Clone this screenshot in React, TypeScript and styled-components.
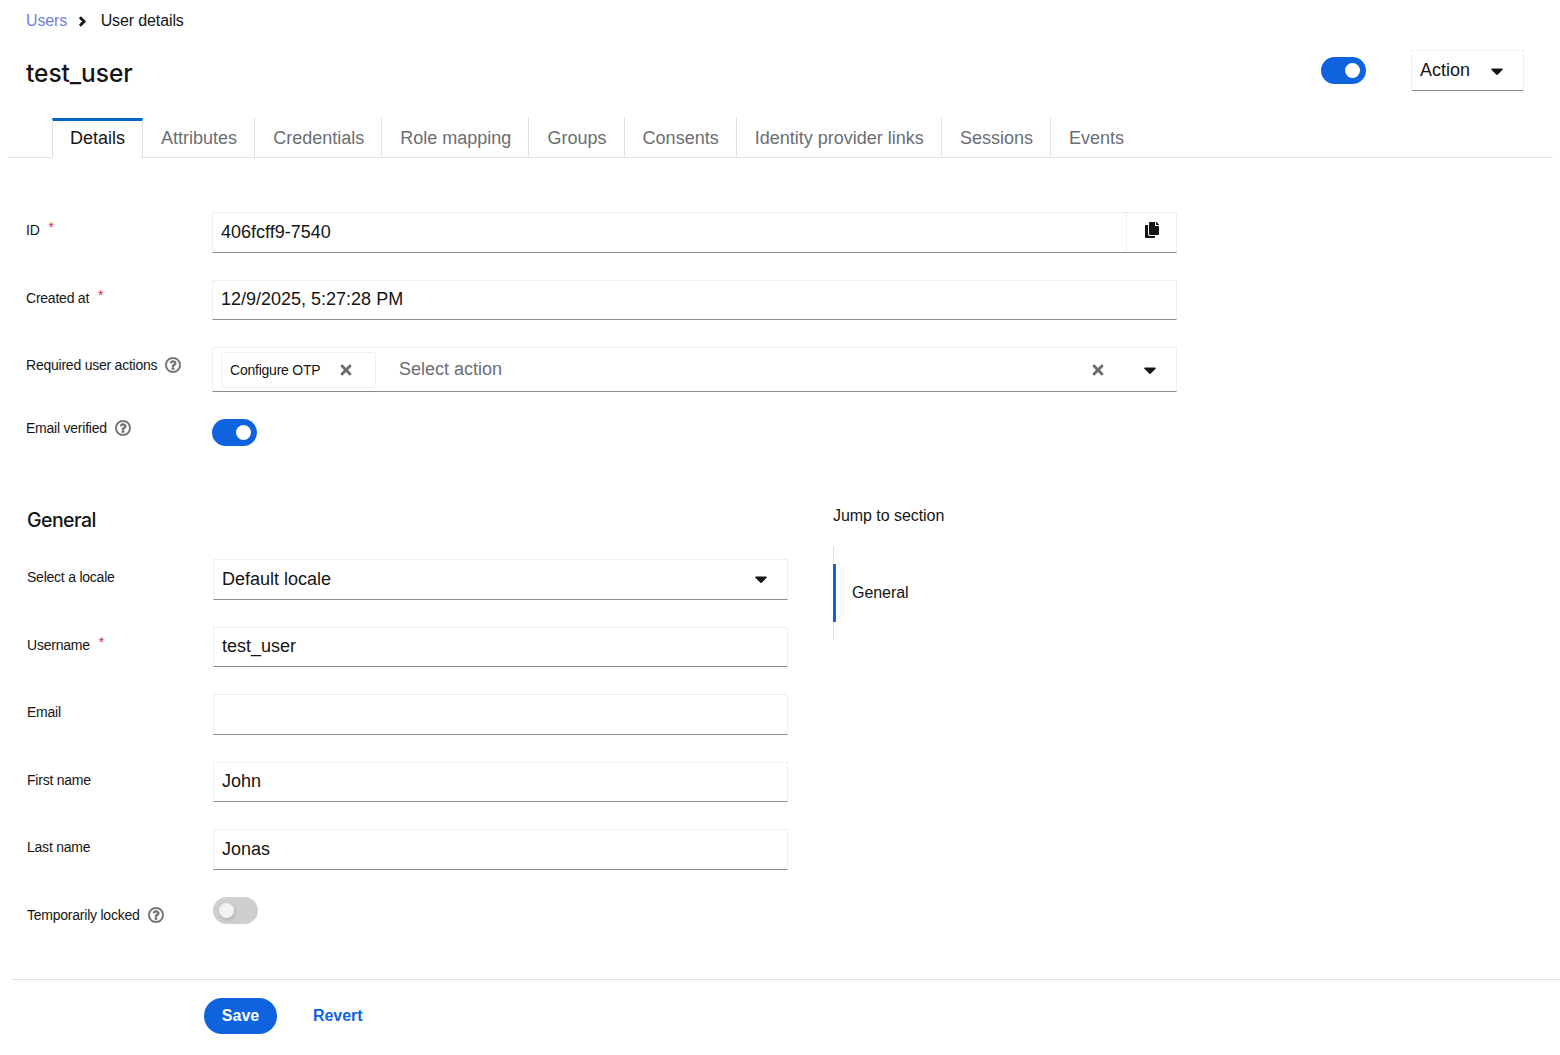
import React from "react";
import styled, { createGlobalStyle } from "styled-components";
import { FaAngleRight, FaCaretDown, FaCopy, FaRegQuestionCircle, FaTimes } from "react-icons/fa";

const Global = createGlobalStyle`
  html, body { margin: 0; padding: 0; background: #fff; }
  body { font-family: "Liberation Sans", Arial, sans-serif; color: #151515; }
  * { box-sizing: border-box; }
`;

const Page = styled.div`
  width: 1560px;
  height: 1055px;
  overflow: hidden;
  display: flex;
  flex-direction: column;
`;

const Breadcrumb = styled.nav`
  display: flex;
  align-items: center;
  height: 18px;
  margin: 12px 0 0 26px;
  font-size: 16px;
  line-height: 18px;
  letter-spacing: -0.12px;
  color: #151515;
`;

const Crumb = styled.a`
  color: #7082d8;
`;

const CrumbSep = styled.span`
  display: inline-flex;
  width: 33.5px;
  justify-content: center;
  padding-right: 2px;
  font-size: 15px;
  color: #151515;
  svg {
    stroke: currentColor;
    stroke-width: 24px;
  }
`;

const Header = styled.header`
  display: flex;
  align-items: center;
  justify-content: space-between;
  height: 41px;
  margin-top: 20px;
  padding: 0 36px 0 26px;
`;

const Title = styled.h1`
  margin: 4px 0 0 0;
  font-family: Inter, "Noto Sans", sans-serif;
  font-size: 24.5px;
  font-weight: 500;
  letter-spacing: -0.05px;
  color: #151515;
`;

const HeaderActions = styled.div`
  display: flex;
  align-items: center;
  gap: 45px;
`;

const Toggle = styled.span<{ $on?: boolean }>`
  position: relative;
  display: block;
  flex: none;
  width: 45px;
  height: 27px;
  border-radius: 14px;
  background: ${(p) => (p.$on ? "#0f63df" : "#cfcfcf")};
  &::after {
    content: "";
    position: absolute;
    top: 6px;
    left: ${(p) => (p.$on ? "24px" : "6px")};
    width: 15px;
    height: 15px;
    border-radius: 50%;
    background: ${(p) => (p.$on ? "#fff" : "#f2f2f2")};
    box-shadow: ${(p) => (p.$on ? "none" : "1px 2px 4px rgba(0, 0, 0, 0.14)")};
  }
`;

const ActionButton = styled.button`
  display: flex;
  align-items: center;
  width: 113px;
  height: 41px;
  padding: 0 0 0 8px;
  background: #fff;
  border: 1px solid #f0f0f0;
  border-bottom-color: #8a8d90;
  font: inherit;
  font-size: 18px;
  color: #151515;
  svg {
    margin-left: 17px;
    font-size: 20px;
  }
`;

const TabBar = styled.div`
  display: flex;
  height: 40px;
  margin: 27px 7px 0 8px;
  padding-left: 44px;
  border-bottom: 1px solid #e0e0e0;
`;

const Tab = styled.div<{ $active?: boolean }>`
  display: flex;
  align-items: center;
  height: ${(p) => (p.$active ? "40px" : "39px")};
  padding: ${(p) => (p.$active ? "0 17px 3px 17px" : "1px 17.1px 0 18px")};
  font-size: 18px;
  white-space: nowrap;
  background: #fff;
  color: ${(p) => (p.$active ? "#151515" : "#6a6e73")};
  border-right: 1px solid #e0e0e0;
  border-left: ${(p) => (p.$active ? "1px solid #e0e0e0" : "none")};
  border-top: ${(p) => (p.$active ? "3px solid #0066cc" : "none")};
  &:last-child {
    border-right: none;
  }
`;

const TopForm = styled.section`
  display: flex;
  flex-direction: column;
  gap: 27px;
  margin: 54px 0 0 26px;
  width: 1151px;
`;

const Row = styled.div`
  display: grid;
  grid-template-columns: 186px 1fr;
  align-items: start;
`;

const Label = styled.label<{ $top?: number }>`
  display: flex;
  align-items: center;
  height: 18px;
  margin-top: ${(p) => p.$top ?? 9}px;
  font-size: 14px;
  letter-spacing: -0.23px;
  color: #151515;
  white-space: nowrap;
`;

const Star = styled.span`
  position: relative;
  top: -3px;
  margin-left: 9px;
  font-size: 14px;
  color: #d9254a;
`;

const Help = styled.span`
  display: inline-flex;
  margin-left: 8px;
  font-size: 16px;
  color: #6a6e73;
  svg {
    stroke: currentColor;
    stroke-width: 14px;
  }
`;

const Field = styled.div<{ $h?: number }>`
  display: flex;
  align-items: center;
  height: ${(p) => p.$h ?? 40.5}px;
  padding-left: 8px;
  border: 1px solid #f0f0f0;
  border-bottom-color: #8a8d90;
  font-size: 18px;
  color: #151515;
  background: #fff;
`;

const FieldText = styled.span`
  flex: 1;
`;

const CopyCell = styled.span`
  display: flex;
  align-items: center;
  justify-content: center;
  width: 50px;
  height: 100%;
  padding: 0 0 5px 1px;
  border-left: 1px solid #f0f0f0;
  font-size: 16px;
  color: #151515;
`;

const Chip = styled.span`
  display: flex;
  align-items: center;
  justify-content: space-between;
  width: 155px;
  height: 36px;
  padding: 0 21px 0 8px;
  border: 1px solid #f0f0f0;
  border-radius: 3px;
  font-size: 14px;
  letter-spacing: -0.23px;
  svg {
    font-size: 16px;
    color: #6a6e73;
  }
`;

const Placeholder = styled.span`
  flex: 1;
  margin-left: 23px;
  color: #6a6e73;
`;

const ClearIcon = styled.span`
  display: inline-flex;
  margin-right: 34px;
  font-size: 16px;
  color: #6a6e73;
`;

const CaretIcon = styled.span`
  display: inline-flex;
  margin-right: 16px;
  font-size: 20px;
  color: #151515;
`;

const SectionWrap = styled.div`
  display: flex;
  margin: 0 0 0 27px;
  gap: 45px;
`;

const GeneralForm = styled.section`
  display: flex;
  flex-direction: column;
  width: 761px;
  margin-top: 59px;
`;

const SectionTitle = styled.h2`
  height: 30px;
  margin: 0 0 24px;
  font-family: Inter, "Noto Sans", sans-serif;
  font-size: 19.5px;
  line-height: 30px;
  font-weight: 500;
  letter-spacing: -0.55px;
  color: #151515;
`;

const Rows = styled.div`
  display: flex;
  flex-direction: column;
  gap: 27px;
`;

const Jump = styled.aside`
  margin-top: 61px;
`;

const JumpTitle = styled.div`
  height: 18px;
  font-size: 16px;
  line-height: 18px;
  letter-spacing: -0.05px;
  color: #151515;
`;

const JumpList = styled.div`
  display: flex;
  align-items: center;
  height: 94px;
  margin-top: 21px;
  border-left: 1px solid #e0e0e0;
`;

const JumpItem = styled.div`
  display: flex;
  align-items: center;
  height: 58px;
  margin: 0 0 0 -1px;
  padding-left: 16px;
  border-left: 3px solid #0f63df;
  font-size: 16px;
  letter-spacing: -0.05px;
  color: #151515;
`;

const Footer = styled.footer`
  display: flex;
  align-items: center;
  gap: 36px;
  margin: 55.5px 0 0 12px;
  padding: 18px 0 0 192px;
  border-top: 1px solid #e0e0e0;
`;

const Save = styled.button`
  width: 73px;
  height: 36px;
  border: none;
  border-radius: 18px;
  background: #0f63df;
  color: #fff;
  font: inherit;
  font-size: 16px;
  font-weight: 700;
`;

const Revert = styled.a`
  font-size: 16px;
  font-weight: 700;
  letter-spacing: -0.05px;
  color: #0f63df;
`;

const tabs = ["Attributes", "Credentials", "Role mapping", "Groups", "Consents", "Identity provider links", "Sessions", "Events"];

const fields: { label: string; value: string; required?: boolean; caret?: boolean }[] = [
  { label: "Select a locale", value: "Default locale", caret: true },
  { label: "Username", value: "test_user", required: true },
  { label: "Email", value: "" },
  { label: "First name", value: "John" },
  { label: "Last name", value: "Jonas" },
];

export default function App() {
  return (
    <Page>
      <Global />
      <Breadcrumb>
        <Crumb>Users</Crumb>
        <CrumbSep><FaAngleRight /></CrumbSep>
        <span>User details</span>
      </Breadcrumb>
      <Header>
        <Title>test_user</Title>
        <HeaderActions>
          <Toggle $on />
          <ActionButton>Action<FaCaretDown /></ActionButton>
        </HeaderActions>
      </Header>
      <TabBar>
        <Tab $active>Details</Tab>
        {tabs.map((t) => <Tab key={t}>{t}</Tab>)}
      </TabBar>
      <TopForm>
        <Row>
          <Label>ID<Star>*</Star></Label>
          <Field>
            <FieldText>406fcff9-7540</FieldText>
            <CopyCell><FaCopy /></CopyCell>
          </Field>
        </Row>
        <Row>
          <Label>Created at<Star>*</Star></Label>
          <Field><FieldText>12/9/2025, 5:27:28 PM</FieldText></Field>
        </Row>
        <Row>
          <Label>Required user actions<Help><FaRegQuestionCircle /></Help></Label>
          <Field $h={45}>
            <Chip>Configure OTP<FaTimes /></Chip>
            <Placeholder>Select action</Placeholder>
            <ClearIcon><FaTimes /></ClearIcon>
            <CaretIcon><FaCaretDown /></CaretIcon>
          </Field>
        </Row>
        <Row>
          <Label $top={0}>Email verified<Help><FaRegQuestionCircle /></Help></Label>
          <Toggle $on />
        </Row>
      </TopForm>
      <SectionWrap>
        <GeneralForm>
          <SectionTitle>General</SectionTitle>
          <Rows>
            {fields.map((f) => (
              <Row key={f.label}>
                <Label>{f.label}{f.required && <Star>*</Star>}</Label>
                <Field>
                  <FieldText>{f.value}</FieldText>
                  {f.caret && <CaretIcon><FaCaretDown /></CaretIcon>}
                </Field>
              </Row>
            ))}
            <Row>
              <Label $top={9}>Temporarily locked<Help><FaRegQuestionCircle /></Help></Label>
              <Toggle />
            </Row>
          </Rows>
        </GeneralForm>
        <Jump>
          <JumpTitle>Jump to section</JumpTitle>
          <JumpList><JumpItem>General</JumpItem></JumpList>
        </Jump>
      </SectionWrap>
      <Footer>
        <Save>Save</Save>
        <Revert>Revert</Revert>
      </Footer>
    </Page>
  );
}
